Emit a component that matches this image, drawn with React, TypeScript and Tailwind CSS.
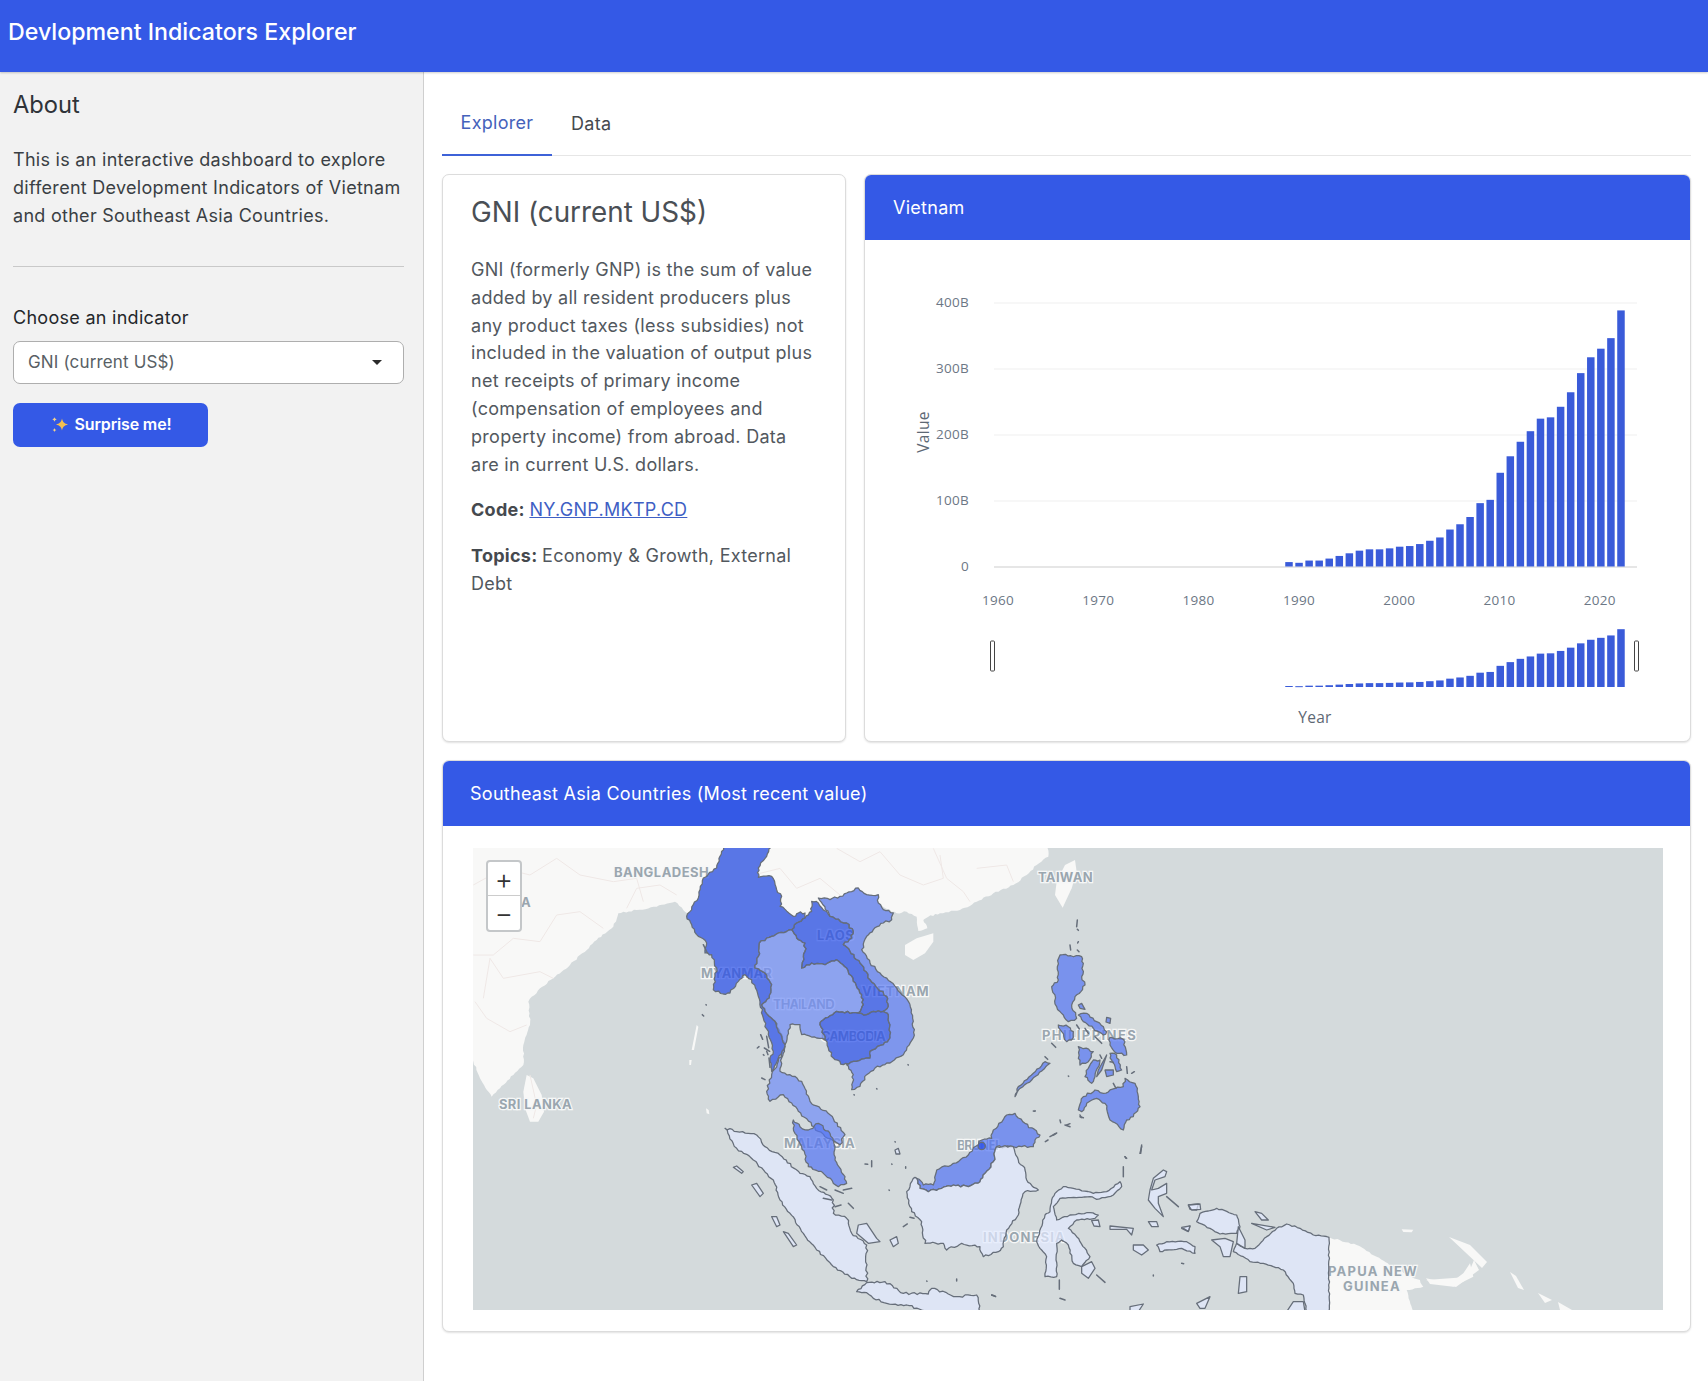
const years = [6.7,5.6,9,9,12,16,20,24,26,26,27.5,30,31,34,39,44,56,64,75,96,101,142,167,189,205,224,226,242,264,293,317,330,346,388];

const C6 = "translate(670 848) scale(0.33333)";
const C7 = "translate(720 1090) scale(0.33333)";
const C8 = "translate(1000 920) scale(0.33333)";
const C9 = "translate(900 1100) scale(0.33333)";
const C10 = "translate(1130 1130) scale(0.33333)";
const C11 = "translate(470 845) scale(0.33333)";
const C12 = "translate(880 845) scale(0.33333)";

const DARK = "#254cea";
const VN = "#5a79f3";
const TH = "#6f8cf7";
const MY = "#5374f3";
const ID = "#e3e9ff";
const stroke = "#666e7a";

// Breaks long straight edges into a coastline; the same edge gives the same points in either direction.
function rough(points: string, amp = 3.5) {
  const pts = points.trim().split(/\s+/).map((p) => p.split(",").map(Number));
  const out: string[] = [];
  pts.forEach((a, i) => {
    const b = pts[(i + 1) % pts.length];
    out.push(`${a[0]},${a[1]}`);
    const len = Math.hypot(b[0] - a[0], b[1] - a[1]);
    const n = Math.floor(len / 9);
    if (n < 1) return;
    const swap = a[0] > b[0] || (a[0] === b[0] && a[1] > b[1]);
    const [p, q] = swap ? [b, a] : [a, b];
    const nx = (q[1] - p[1]) / len;
    const ny = -(q[0] - p[0]) / len;
    const mids: string[] = [];
    for (let k = 1; k <= n; k++) {
      const t = k / (n + 1);
      const s = Math.sin((p[0] * 12.9898 + p[1] * 78.233 + q[0] * 37.719 + q[1] * 11.13 + k * 4.1) * 43.17);
      const noise = (s * 1000 - Math.floor(s * 1000) - 0.5) * 2 * amp;
      mids.push(`${(p[0] + (q[0] - p[0]) * t + nx * noise).toFixed(1)},${(p[1] + (q[1] - p[1]) * t + ny * noise).toFixed(1)}`);
    }
    if (swap) mids.reverse();
    out.push(...mids);
  });
  return out.join(" ");
}

function R({ fill, points, amp }: { fill: string; points: string; amp?: number }) {
  return <polygon fill={fill} points={rough(points, amp)} />;
}

const MYANMAR = "165,-10 305,-10 290,25 265,60 265,88 305,85 320,125 335,145 330,175 370,205 385,195 405,195 405,210 380,225 365,245 325,255 290,270 268,285 265,325 255,360 285,375 305,410 298,450 275,470 285,490 315,520 335,560 345,595 325,630 305,670 300,640 310,610 295,560 280,510 265,445 245,395 225,380 205,400 180,435 160,438 130,425 135,385 140,360 125,320 105,315 110,285 85,265 65,230 50,205 70,170 85,150 100,90 140,60 150,25";
const THAI_N = "268,285 290,270 325,255 365,245 380,270 405,285 405,310 395,360 425,345 465,350 500,335 530,360 550,400 575,440 580,470 565,495 500,490 460,515 450,530 465,575 440,570 395,560 390,530 360,530 345,590 315,520 285,490 275,470 298,450 305,410 285,375 255,360 265,325";
const THAI_S = "345,595 325,640 305,680 290,730 300,760 340,740 365,765 385,790 445,850 510,890 525,860 480,800 420,760 395,700 360,680 330,670 335,630";
const LAOS = "425,160 445,165 480,205 530,225 550,250 545,270 520,290 540,310 570,345 600,395 650,445 655,475 640,490 610,490 590,500 565,495 580,470 575,440 550,400 530,360 500,335 465,350 425,345 395,360 405,310 405,285 380,270 365,245 380,225 405,210 425,190";
const CAMBODIA = "450,530 460,515 500,490 565,495 590,500 610,490 640,490 655,500 660,530 660,570 640,590 600,610 600,630 550,640 520,650 490,630 475,600 465,575";
const VIETNAM = "445,150 480,155 510,145 530,135 565,120 590,140 625,140 625,165 640,185 670,195 665,215 640,225 610,245 590,265 575,305 600,345 630,375 680,420 715,460 730,520 730,570 700,620 660,645 615,660 590,680 570,715 545,725 550,680 530,650 550,640 600,630 600,610 640,590 660,570 660,530 655,500 640,490 655,475 650,445 600,395 570,345 540,310 520,290 545,270 550,250 530,225 480,205";

function Bars() {
  return (
    <svg viewBox="865 240 825 501" className="block w-full h-full font-['Open_Sans',sans-serif]">
      {[303, 369, 435, 501, 567].map((y, i) => (
        <line key={y} x1={994} x2={1637} y1={y} y2={y} stroke={i === 4 ? "#e6e6e6" : "#efefef"} strokeWidth={i === 4 ? 2 : 1} />
      ))}
      {["400B", "300B", "200B", "100B", "0"].map((t, i) => (
        <text key={t} x={969} y={307 + i * 66} textAnchor="end" fontSize={13.5} fill="#6c7785">{t}</text>
      ))}
      {[1960, 1970, 1980, 1990, 2000, 2010, 2020].map((t, i) => (
        <text key={t} x={998 + i * 100.3} y={604.5} textAnchor="middle" fontSize={13.5} fill="#6c7785">{t}</text>
      ))}
      <text x={0} y={0} transform="translate(929 432) rotate(-90)" textAnchor="middle" fontSize={15.5} fill="#5d6874">Value</text>
      <text x={1315} y={722.5} textAnchor="middle" fontSize={15.5} fill="#5d6874">Year</text>
      {years.map((v, i) => {
        const x = 1289 + i * 10.06 - 3.75;
        return <rect key={i} x={x} y={566.5 - v * 0.66} width={7.5} height={v * 0.66} fill="#3a5bd9" />;
      })}
      {years.map((v, i) => {
        const x = 1289 + i * 10.06 - 3.75;
        return <rect key={i} x={x} y={687 - v * 0.149} width={7.5} height={Math.max(v * 0.149, 1)} fill="#3a5bd9" />;
      })}
      <rect x={990.5} y={641} width={4} height={30} rx={1} fill="#fff" stroke="#444" strokeWidth={1} />
      <rect x={1634.5} y={641} width={4} height={30} rx={1} fill="#fff" stroke="#444" strokeWidth={1} />
    </svg>
  );
}

function Label({ x, y, w, children }: { x: number; y: number; w: number; children: string }) {
  return (
    <text x={x} y={y} fontSize={13} fontWeight={700} fill="#9aa6af" stroke="#f6f7f7" strokeWidth={2.5} paintOrder="stroke" textLength={w} lengthAdjust="spacing">
      {children}
    </text>
  );
}

function Map() {
  return (
    <svg viewBox="473 848 1190 462" className="block w-full h-full bg-[#d4dadc] font-['Inter',sans-serif]">
      {/* base land */}
      <g fill="#f8f8f7">
        <g transform={C11}>
          <polygon points={rough("0,630 10,650 30,700 65,755 90,730 130,690 160,660 160,600 180,540 175,470 210,430 250,400 300,360 380,285 430,245 445,205 500,195 560,185 615,170 640,195 660,215 780,215 780,0 0,0", 2.5)} />
          <polygon points="170,690 190,700 215,750 222,800 205,830 180,830 165,790 160,740" />
          <polygon points="680,540 685,545 672,615 665,615" />
          <polygon points="658,645 665,645 663,660 658,660" />
          <polygon points="708,790 716,795 718,808 710,805" />
        </g>
        <g transform={C12}>
          <polygon points={rough("-500,0 505,0 505,35 470,60 440,90 400,120 340,145 290,170 240,195 180,205 145,215 130,225 142,250 115,258 110,215 80,200 50,205 0,180 -60,300 -500,300", 2.5)} />
          <polygon points="75,300 110,280 160,265 160,290 135,325 100,345 75,330" />
          <polygon points="555,60 585,45 590,80 575,130 548,188 525,150 530,110" />
        </g>
        <g transform={C10}>
          <polygon points={rough("597,322 680,345 740,380 800,420 870,450 880,470 830,480 850,545 597,545", 2.5)} />
          <polygon points="815,298 850,299 845,307 820,306" />
          <polygon points="888,445 960,460 1000,430 1020,400 1030,440 970,470 900,462" />
        </g>
        <polygon points="1449,1237 1470,1245 1487,1262 1482,1268 1465,1252" />
        <polygon points="1426,1280 1467,1277 1474,1260 1479,1270 1456,1287" />
        <polygon points="1510,1272 1516,1276 1524,1290 1518,1288" />
        <polygon points="1538,1293 1552,1300 1545,1303" />
        <polygon points="1558,1302 1572,1310 1560,1310" />
      </g>
      {/* land borders */}
      <g fill="none" stroke="#efe8e6" strokeWidth={3} transform={C11}>
        <polyline points="10,120 100,70 180,90 260,40 330,90 430,110 500,100 520,170" />
        <polyline points="10,330 70,330 130,280 210,290 260,210 330,200 400,250" />
        <polyline points="40,460 60,340 100,400 210,380 250,400" />
        <polyline points="15,470 50,520 120,560 170,540" />
        <polyline points="470,190 500,130 570,120 620,150" />
        <polyline points="180,690 200,780 190,820" />
      </g>
      <g fill="none" stroke="#efe8e6" strokeWidth={3} transform={C12}>
        <polyline points="-420,20 -380,90 -300,70 -250,130 -180,100 -120,150" />
        <polyline points="0,20 60,90 130,120 190,100 180,30" />
        <polyline points="160,10 200,100 250,140 270,170" />
        <polyline points="290,70 380,60 400,110" />
        <polyline points="-130,10 -60,50 0,20" />
      </g>
      {/* even ground under the mainland countries, so that the coast does not show through */}
      <g fill="#d4dadc" transform={C6}>
        {[MYANMAR, THAI_N, THAI_S, LAOS, CAMBODIA, VIETNAM].map((p, i) => <polygon key={i} points={rough(p)} />)}
      </g>
      {/* labels beneath the choropleth */}
      <Label x={614} y={877} w={95}>BANGLADESH</Label>
      <text x={531} y={907} textAnchor="end" fontSize={13} fontWeight={700} fill="#9aa6af">INDIA</text>
      <Label x={701} y={978} w={71}>MYANMAR</Label>
      <Label x={817} y={940} w={37}>LAOS</Label>
      <Label x={862} y={996} w={67}>VIETNAM</Label>
      <Label x={773} y={1009} w={62}>THAILAND</Label>
      <Label x={821} y={1041} w={65}>CAMBODIA</Label>
      <Label x={1042} y={1040} w={94}>PHILIPPINES</Label>
      <Label x={784} y={1148} w={71}>MALAYSIA</Label>
      <Label x={957} y={1150} w={42}>BRUNEI</Label>
      <Label x={983} y={1242} w={82}>INDONESIA</Label>
      <Label x={1038} y={882} w={55}>TAIWAN</Label>
      <Label x={499} y={1109} w={73}>SRI LANKA</Label>
      <Label x={1328} y={1276} w={89}>PAPUA NEW</Label>
      <Label x={1343} y={1291} w={57}>GUINEA</Label>
      {/* choropleth */}
      <g stroke={stroke} strokeWidth={3.8} strokeLinejoin="round" fillOpacity={0.7}>
        <g transform={C6}>
          <R fill={DARK} points={MYANMAR} />
          <R fill={TH} points={THAI_N} />
          <R fill={TH} points={THAI_S} />
          <R fill={DARK} points={LAOS} />
          <R fill={DARK} points={CAMBODIA} />
          <R fill={VN} points={VIETNAM} />
        </g>
        <g transform={C7}>
          <R fill={MY} points="220,90 240,110 265,120 295,100 330,130 345,170 345,210 375,260 380,280 355,290 310,250 265,230 245,170 225,130" />
          <R fill={MY} points="590,265 610,285 640,285 650,240 700,220 745,195 785,150 815,145 820,120 860,75 885,70 915,100 960,135 945,150 940,170 905,170 830,170 820,215 795,250 780,275 745,290 700,285 665,295 625,305 600,295" />
          <circle cx={785} cy={168} r={11} fill={DARK} />
          <R fill={ID} points="580,265 590,265 600,295 625,305 665,295 700,285 745,290 780,275 795,250 820,215 830,170 880,170 895,210 915,240 920,270 955,300 915,305 900,345 895,375 860,420 850,470 835,485 790,500 780,470 725,460 680,480 670,460 615,460 605,395 575,365 560,305" />
          <R fill={ID} points="15,115 50,125 110,135 135,170 180,195 240,250 270,260 290,295 325,315 340,330 340,370 380,385 395,430 440,465 440,575 395,565 340,530 290,480 250,430 210,370 180,330 160,270 100,210 50,175" />
          <R fill={ID} points="410,605 440,578 495,575 550,610 625,612 635,595 710,620 770,615 780,665 620,665 560,645 500,640 460,625 440,608" />
          <polygon fill={ID} points="415,405 440,400 470,445 480,455 445,460 410,430" />
          <polygon fill={ID} points="510,450 530,440 535,460 520,470" />
          <polygon fill={ID} points="95,285 110,280 130,310 120,320" />
          <polygon fill={ID} points="155,380 170,380 180,405 170,410" />
          <polygon fill={ID} points="190,425 205,430 230,465 220,470" />
          <polygon fill={ID} points="40,232 50,228 70,245 65,250" />
          <polygon fill={ID} points="525,180 535,175 540,192 528,192" />
        </g>
        <g transform={C8}>
          <R fill={MY} points="180,105 245,110 250,130 245,170 255,195 225,230 215,255 230,295 205,305 190,285 170,260 155,200 175,180 172,140" />
          <R fill={MY} points="175,315 205,320 220,335 215,360 200,365 185,335" />
          <R fill={MY} points="330,352 370,358 380,405 350,400 330,375" />
          <R fill={MY} points="330,400 350,405 365,450 350,455 335,420" />
          <R fill={MY} points="235,380 280,395 265,425 240,435 235,415" />
          <R fill={MY} points="280,420 300,420 285,470 275,490 255,470 265,445" />
          <polygon fill={MY} points="320,405 305,450 290,470 295,450" />
          <polygon fill={MY} points="315,450 340,450 340,465 320,470" />
          <R fill={MY} points="235,285 260,280 290,305 320,335 310,345 280,325 250,305" />
          <R fill={MY} points="375,475 405,490 415,530 420,560 400,590 380,600 370,630 330,600 315,550 290,535 260,550 245,575 235,570 250,530 285,510 310,520 345,505 370,500" />
          <R fill={MY} points="150,430 95,480 60,505 45,530 55,500 100,460 135,425" amp={2} />
          <polygon fill={MY} points="235,255 245,250 255,268 240,265" />
          <polygon fill={MY} points="320,292 332,295 330,310 318,306" />
        </g>
        <g transform={C9}>
          <R fill={ID} points="435,345 450,335 455,300 465,280 490,260 520,265 580,280 620,275 660,245 665,260 640,285 590,298 570,290 480,295 460,320 470,360 510,345 570,338 595,345 585,355 530,360 505,385 530,410 555,445 570,470 545,500 520,490 505,435 485,420 470,430 470,530 435,530 440,470 420,445 410,425" amp={2} />
          <polygon fill={ID} points="545,500 575,485 585,505 565,535 545,520" />
          <polygon fill={ID} points="790,210 800,215 795,230 765,240 755,270 775,265 800,250 800,280 775,290 775,310 790,350 765,325 745,300 750,270 760,235" />
          <R fill={ID} points="770,435 800,425 860,425 885,440 885,460 845,445 800,450 780,455" amp={2} />
          <polygon fill={ID} points="700,435 730,435 745,450 725,465 700,450" />
          <polygon fill={ID} points="630,378 700,385 695,405 680,388 630,388" />
          <polygon fill={ID} points="745,365 770,365 775,380 755,380" />
          <polygon fill={ID} points="845,385 870,378 865,395" />
          <polygon fill={ID} points="865,315 895,312 890,330 870,328" />
          <polygon fill={ID} points="575,362 595,360 600,380 582,378" />
        </g>
        <g transform={C10}>
          <R fill={ID} points="597,322 597,545 530,545 520,495 495,490 490,460 460,420 400,400 360,395 340,380 310,365 320,340 345,355 375,355 410,320 440,295 470,282 510,295 550,315" amp={2} />
          <R fill={ID} points="210,250 260,235 320,255 330,290 320,310 270,312 240,295 200,275" amp={2} />
          <polygon fill={ID} points="245,330 285,325 310,335 300,380 280,380 270,350" />
          <polygon fill={ID} points="325,290 345,330 345,355 320,340" />
          <polygon fill={ID} points="375,245 395,250 415,270 395,270" />
          <polygon fill={ID} points="365,280 435,292 410,300" />
          <polygon fill={ID} points="330,440 350,440 350,485 325,490" />
          <polygon fill={ID} points="470,545 490,515 520,515 525,545" />
          <polygon fill={ID} points="0,530 40,522 25,545 0,545" />
          <polygon fill={ID} points="200,520 240,500 225,535 210,535" />
          <polygon fill={ID} points="155,292 180,288 175,304" />
          <polygon fill={ID} points="175,225 210,222 212,238 185,240" />
        </g>
      </g>
      {/* tiny islets */}
      <g fill="none" stroke={stroke} strokeWidth={4.5} strokeLinecap="round">
        <g transform={C6}>
          <path d="M100 290l12 25M272 560l6 14M290 565l6 34M283 600l16 10M262 600l5-4M297 630l3 28M275 690l10 5M97 500l4 4M108 470l1 1M552 740l1 1M620 722l1 1M714 650l1 1M290 610l4 10M280 620l2 2" />
        </g>
        <g transform={C7}>
          <path d="M300 290l20 10M310 325l25 5M345 300l25 10M370 300l25-5M345 350l18-5M385 340l15 15M525 155l1 1M455 212v18M435 222l8 1M515 222l1 1M557 230v5M507 300l1 1M620 573l1 1M710 567v6M550 410l12-8M570 382l12 3M815 615l12 5" />
        </g>
        <g transform={C8}>
          <path d="M210 75l2 15M235 65l-2 4M232 90l5 5M232 0l-2 20M232 28l3 3M155 370l12 12M135 410l8 8M240 590l10 3M195 615l15 5M150 650l15-8M340 490l8 15M380 440l2 20M395 460l8-5M425 680l-5 20M375 710l5 5M105 572l1 1M205 468l1 1M230 315l8 12M255 325l10 15M285 350l20 20M300 405l5 10M330 425l10 2" />
        </g>
        <g transform={C9}>
          <path d="M480 60l2 8M500 75l10-4M540 45l4 8M460 105l10-6M436 125l8-5M725 135l-3 25M675 170l3 5M670 200v30M400 33l3 1M480 595l15 5M275 585l10 3M478 540v28M845 490l6 1M590 525l25 22M800 290l35 30M760 525v3" />
        </g>
      </g>
    </svg>
  );
}

function Sparkle() {
  return (
    <svg width="20" height="18" viewBox="0 0 20 18" aria-hidden="true">
      <path d="M12 2.500c.8 3.600 2.200 5 6 6-3.800 1-5.200 2.400-6 6-.8-3.600-2.200-5-6-6 3.800-1 5.200-2.400 6-6z" fill="#f5bf4f" />
      <path d="M4.500 1c.3 1.500.9 2 2.300 2.400-1.400.4-2 .9-2.300 2.400-.3-1.500-.9-2-2.300-2.400C3.600 3 4.200 2.500 4.500 1zM4.500 12c.3 1.300.8 1.800 2 2.100-1.200.3-1.700.8-2 2.100-.3-1.300-.8-1.800-2-2.100 1.200-.3 1.700-.8 2-2.100z" fill="#f8d488" />
    </svg>
  );
}

export default function App() {
  return (
    <div className="flex min-h-screen flex-col bg-white font-['Inter',sans-serif] text-[18px] leading-[27.8px] tracking-[0.28px] text-[#343a40]">
      <header className="relative z-10 flex h-[72px] items-start bg-[#3459e6] px-2 pt-[16px] shadow-[0_1px_2px_rgba(0,0,0,0.2)]">
        <h1 className="text-[23.2px] font-medium leading-[32px] tracking-normal text-white">Devlopment Indicators Explorer</h1>
      </header>
      <div className="flex flex-1">
        <aside className="w-[424px] shrink-0 border-r border-[#cfcfcf] bg-[#f2f2f2] pl-[13px] pr-[19px] pt-[17px]">
          <h2 className="text-[23.700px] font-normal leading-[32px] tracking-normal text-[#2f3338]">About</h2>
          <p className="mt-[25px] text-[#3a3f44]">
            This is an interactive dashboard to explore different Development Indicators of Vietnam and other Southeast Asia Countries.
          </p>
          <hr className="mt-[37px] border-t border-[#c9c9c9]" />
          <label className="mt-[37px] block font-normal text-[#24272b]">Choose an indicator</label>
          <div className="mt-[9px] flex h-[43px] items-center justify-between rounded-[7px] border border-[#aeaeae] bg-white pl-[14px] pr-[21px] text-[17px] tracking-[0.15px] text-[#595f65]">
            <span>GNI (current US$)</span>
            <span className="h-0 w-0 border-x-[5.500px] border-t-[5.500px] border-x-transparent border-t-[#2b2b2b]" />
          </div>
          <button className="mt-[19px] flex h-[44px] w-[195px] items-center justify-center gap-[5px] rounded-[7px] bg-[#3459e6] text-[16px] font-semibold tracking-[-0.15px] text-white">
            <Sparkle />
            <span>Surprise me!</span>
          </button>
        </aside>
        <main className="min-w-0 flex-1 pl-[18px] pr-[17px] pt-5">
          <nav className="flex h-[64px] border-b border-[#e6e6e6]">
            <div className="flex h-[64px] w-[110px] items-center justify-center border-b-2 border-[#3e62d8] text-[#4562bb]">Explorer</div>
            <div className="flex h-[63px] items-center pl-[19px] text-[#45494e]">Data</div>
          </nav>
          <div className="mt-[18px] grid h-[568px] grid-cols-[404px_1fr] gap-[18px]">
            <section className="rounded-[7px] border border-[#dcdcdc] bg-white px-[28px] pt-[19px] text-[#52585e] shadow-[0_1px_2px_rgba(0,0,0,0.12)]">
              <h3 className="text-[27.800px] font-normal leading-[36px] tracking-normal text-[#4a4f55]">GNI (current US$)</h3>
              <p className="mt-[26px]">
                GNI (formerly GNP) is the sum of value added by all resident producers plus any product taxes (less subsidies) not included in the valuation of output plus net receipts of primary income (compensation of employees and property income) from abroad. Data are in current U.S. dollars.
              </p>
              <p className="mt-[18px]">
                <b className="font-bold text-[#45494e]">Code: </b>
                <a className="text-[#3f5fc4] underline">NY.GNP.MKTP.CD</a>
              </p>
              <p className="mt-[18px]">
                <b className="font-bold text-[#45494e]">Topics: </b>Economy &amp; Growth, External Debt
              </p>
            </section>
            <section className="flex flex-col overflow-hidden rounded-[7px] border border-[#dcdcdc] bg-white shadow-[0_1px_2px_rgba(0,0,0,0.12)]">
              <div className="flex h-[65px] shrink-0 items-center bg-[#3459e6] px-[28px] text-white">Vietnam</div>
              <div className="min-h-0 flex-1"><Bars /></div>
            </section>
          </div>
          <section className="mt-[18px] flex h-[572px] flex-col overflow-hidden rounded-[7px] border border-[#dcdcdc] bg-white shadow-[0_1px_2px_rgba(0,0,0,0.12)]">
            <div className="flex h-[65px] shrink-0 items-center bg-[#3459e6] px-[27px] text-white">Southeast Asia Countries (Most recent value)</div>
            <div className="pl-[30px] pr-[27px] pt-[22px]">
              <div className="relative h-[462px]">
                <Map />
                <div className="absolute left-[13px] top-[12px] w-[36px] overflow-hidden rounded-[4px] border-2 border-[#c4c7c9] bg-white text-center text-[#333]">
                  <div className="flex h-[34px] items-center justify-center border-b border-[#ccc] text-[28px] font-light leading-none">+</div>
                  <div className="flex h-[34px] items-center justify-center text-[28px] font-light leading-none">−</div>
                </div>
              </div>
            </div>
          </section>
        </main>
      </div>
    </div>
  );
}
